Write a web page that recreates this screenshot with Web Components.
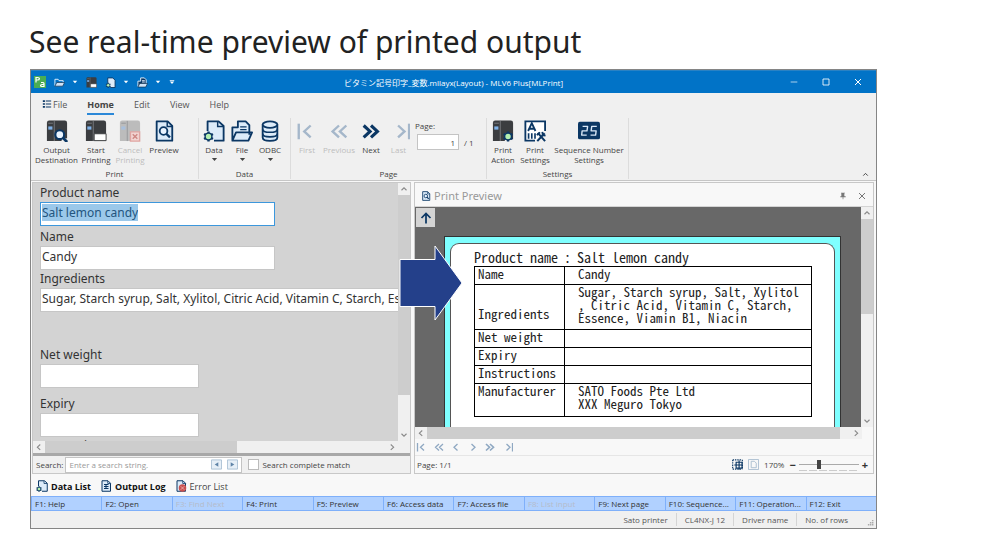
<!DOCTYPE html>
<html lang="en">
<head>
<meta charset="utf-8">
<title>Real-time preview</title>
<style>
html,body{margin:0;background:#fff}
body{font-family:"Open Sans","Noto Sans CJK JP",sans-serif;font-size:8px;color:#444}
</style>
</head>
<body>
<feature-page></feature-page>
<script>
const define=(name,css,html)=>customElements.define(name,class extends HTMLElement{
  connectedCallback(){
    if(this.shadowRoot)return;
    const t=document.createElement('template');
    t.innerHTML=`<style>*{box-sizing:border-box}button{font:inherit;color:inherit;background:none;border:0;padding:0;margin:0}input{font:inherit;color:inherit;margin:0;min-width:0;outline:0}${css}</style>`+(typeof html==='function'?html(this):html);
    this.attachShadow({mode:'open'}).append(t.content.cloneNode(true));
  }
});

const N='#0b3764',L='#dcebf9';
const printer=(c='#3b3d40',b='#7fb0e6')=>`<path fill="${c}" d="M1 3q0-2.500 2.500-2.500h17Q23 .5 23 3v20H1z"/><path fill="${b}" d="M2.500 7h4.500v3.500H2.500z"/><path stroke="#8a8d90" d="M9 1v22M2.500 3.500h5" stroke-width=".8"/>`;
const doc=(x='')=>`<path fill="${L}" stroke="${N}" stroke-width="2" stroke-linejoin="round" d="M4 1.500h12l5 5v16H4z"/><path fill="none" stroke="${N}" stroke-width="1.600" d="M15.500 2v5H21"/>${x}`;
const gear=(x,y,s=1)=>`<g transform="translate(${x} ${y}) scale(${s})"><path stroke="${N}" stroke-width="2.600" d="M0-5.500v11M-4.800-2.800l9.600 5.600M-4.800 2.800l9.600-5.600"/><circle r="3.700" fill="#b5efb0" stroke="${N}" stroke-width="1.500"/></g>`;
const lens=(x,y,s=1)=>`<g transform="translate(${x} ${y}) scale(${s})"><circle r="4.200" fill="#eaf4ff" stroke="${N}" stroke-width="2"/><path stroke="${N}" stroke-width="2.600" d="M3 3l4 4"/></g>`;
const chev=(d,w=2.6)=>`<path fill="none" stroke="currentColor" stroke-width="${w}" d="${d}"/>`;
const ICONS={
 output:printer()+'<path fill="#efefef" d="M17 20h7v4h-7z"/>'+lens(15,16,1.15),
 start:printer()+'<path fill="#fff" stroke="#3b3d40" d="M10 15h13v7.500H10z"/>',
 cancel:printer('#bcbcbc','#a8bfdc')+'<path fill="#f2d5d3" stroke="#dfa5a2" stroke-width="1.500" d="M12.500 13h10v10h-10z"/><path stroke="#cf8884" stroke-width="1.600" d="M15 15.500l5 5m0-5l-5 5"/>',
 preview:doc(lens(11.500,12)),
 data:`<path fill="${L}" stroke="${N}" stroke-width="2" stroke-linejoin="round" d="M5 12V1.500h12l5.500 5v16H12"/><path fill="none" stroke="${N}" stroke-width="1.600" d="M16 2v5h6"/>`+gear(6,18),
 file:`<path fill="${L}" stroke="${N}" stroke-width="2" stroke-linejoin="round" d="M1.500 22V8h6V1.500H16l4 4V16M1.500 22.500l4-9H23l-4 9z"/><path stroke="${N}" stroke-width="1.500" d="M10 7.500h7M10 10.500h7"/>`,
 db:`<path fill="${L}" stroke="${N}" stroke-width="2" d="M4 5v14c0 5 16 5 16 0V5"/><ellipse cx="12" cy="5" rx="8" ry="3.500" fill="${L}" stroke="${N}" stroke-width="2"/><path fill="none" stroke="${N}" stroke-width="1.800" d="M4 10c0 4.500 16 4.500 16 0M4 15c0 4.500 16 4.500 16 0"/>`,
 first:chev('M3 4v17')+chev('M16 6l-7 6.500 7 6.500'),
 previous:chev('M12 6l-7 6.500 7 6.500M20 6l-7 6.500 7 6.500'),
 next:chev('M4 6l7 6.500L4 19M12 6l7 6.500-7 6.500',3.4),
 last:chev('M23 4v17')+chev('M11 6l7 6.500-7 6.500'),
 left:chev('M15 6l-7 6.500 7 6.500'),right:chev('M9 6l7 6.500L9 19'),
 up:chev('M6 15l6-6 6 6'),down:chev('M6 9l6 6 6-6'),
 action:printer()+'<path fill="#efefef" d="M14 21h10v3H14z"/>'+gear(17.500,18),
 settings:`<path fill="#fff" stroke="${N}" stroke-width="2" d="M23 12V1.500H1.500V22.500H12"/><path fill="none" stroke="${N}" stroke-width="2" d="M4.500 12L8.500 3.500l4 8.500M6 9.500h5"/><path stroke="${N}" stroke-width="1.800" d="M5 14.500v6M8.500 14.500v6M12 14.500v6"/><path stroke="${N}" stroke-width="2.200" d="M15 14l8 9M22.500 14.500l-8 8.500"/><path fill="none" stroke="${N}" stroke-width="2" d="M14 16.500l3.500-3M20 13l.5 3.500 3 .5"/>`,
 sequence:`<rect y="2" width="24" height="19" rx="2" fill="${N}"/><path fill="none" stroke="#d9e8f8" stroke-width="1.500" stroke-linejoin="round" d="M5 7h5.500l-.7 4.800H4.500L4 16.500h5.500M20.500 7H15l-.7 4.800h5.500l-.6 4.700h-5.500"/>`,
 list:`<path stroke="${N}" stroke-width="4" d="M2 5h5M2 12h5M2 19h5"/><path stroke="${N}" stroke-width="2.500" d="M9 5h13M9 12h13M9 19h13"/>`,
 logo:'<path fill="#4aad54" d="M0 0h24v24H0z"/><path fill="none" stroke="#fff" stroke-width="2.400" d="M4 13V3h3c5 0 5 5 0 5H4M14 13h4q2 0 2 2v6h-4q-3 0-3-2t3-2h4"/>',
 openw:'<path fill="none" stroke="#e8f3ff" stroke-width="2" d="M2 19V5h7l2 3h9v4"/><path fill="#cfe3f7" stroke="#12324f" stroke-width="1.500" d="M2 20l4-8h17l-4 8z"/>',
 filew:'<path fill="#0b3764" stroke="#e8f3ff" stroke-width="2" d="M2 21V9h6V2h8l4 4v8"/><path fill="#cfe3f7" stroke="#12324f" stroke-width="1.500" d="M2 22l4-8h17l-4 8z"/><path stroke="#e8f3ff" stroke-width="2" d="M11 8h6M11 11h6"/>',
 dataw:'<path fill="#dcebf9" stroke="#0b3764" stroke-width="2" d="M6 12V2h11l5 5v16H12z"/>'+gear(7,18),
 caret:'<path fill="currentColor" d="M3 7h18l-9 10z"/>',
 custom:'<path fill="currentColor" d="M3 4h18v3H3zM3 10h18l-9 10z"/>',
 min:'<path stroke="currentColor" stroke-width="2" d="M2 12h20"/>',
 max:'<path fill="none" stroke="currentColor" stroke-width="2.500" d="M3 3h18v18H3z"/>',
 close:'<path stroke="currentColor" stroke-width="3" d="M3 3l18 18M21 3L3 21"/>',
 pin:'<path fill="currentColor" d="M6 2h12v2h-2v9h4v3h-7v6h-2v-6H4v-3h3V4H6z"/>',
 arrow:`<path fill="none" stroke="${N}" stroke-width="3.500" d="M12 23V3M3 12l9-9 9 9"/>`,
 log:doc(`<path stroke="${N}" stroke-width="2" d="M8 9h9M8 13h9M8 17h9M12 8v10"/>`),
 error:doc('<circle cx="15" cy="16" r="7.500" fill="#c8504f"/><path fill="none" stroke="#f3b8b5" stroke-width="1.600" d="M11.500 12.500l7 7m0-7l-7 7"/>'),
 fit:`<path fill="none" stroke="${N}" stroke-width="2.500" stroke-dasharray="3 2" d="M1.500 2h21M1.500 2v20M1.500 22h21M22.500 2v20"/><path fill="none" stroke="${N}" stroke-width="2.500" d="M9 7h13v13H9zM5 13h18M15.500 3v20"/>`,
 whole:'<path fill="none" stroke="currentColor" stroke-width="2" d="M1 1h22v22H1z"/><path fill="none" stroke="currentColor" stroke-width="2" d="M7 5h7l4 4v10H7z"/>',
 back:'<path fill="#e6eff7" stroke="currentColor" stroke-width="2" d="M1 2h22v20H1z"/><path fill="#5f84a8" d="M16 7v10l-8-5z"/>',
 fwd:'<path fill="#e6eff7" stroke="currentColor" stroke-width="2" d="M1 2h22v20H1z"/><path fill="#5f84a8" d="M8 7v10l8-5z"/>',
 grip:'<path fill="#aaa" d="M17 3h5v5h-5zM17 10h5v5h-5zM10 10h5v5h-5zM17 17h5v5h-5zM10 17h5v5h-5zM3 17h5v5H3z"/>'
};
define('ui-icon',':host{display:block;flex:none;width:var(--size,12px);height:var(--size,12px)}svg{display:block;width:100%;height:100%}',
 e=>`<svg viewBox="0 0 24 24" aria-hidden="true">${ICONS[e.getAttribute('name')]}</svg>`);

define('title-bar',`:host{display:grid;grid-template-columns:1fr auto 1fr;align-items:center;height:23px;background:#0173c7;color:#fff;border-top:1px solid #2a82c4}
 div{display:flex;align-items:center}.quick{padding-left:3px;gap:8px}.pair{gap:7px;--size:11px}.win{justify-content:flex-end;gap:24px;padding-right:14px}
 .small{--size:6px}.win button{--size:8px}`,
 `<div class="quick"><ui-icon name="logo"></ui-icon>
 <div class="pair"><button aria-label="Open"><ui-icon name="openw"></ui-icon></button><button class="small" aria-label="Recent"><ui-icon name="caret"></ui-icon></button></div>
 <button aria-label="Start printing" style="--size:11px"><ui-icon name="start"></ui-icon></button>
 <div class="pair"><button aria-label="Data"><ui-icon name="dataw"></ui-icon></button><button class="small" aria-label="Data menu"><ui-icon name="caret"></ui-icon></button></div>
 <div class="pair"><button aria-label="File"><ui-icon name="filew"></ui-icon></button><button class="small" aria-label="File menu"><ui-icon name="caret"></ui-icon></button></div>
 <button class="small" aria-label="Customize"><ui-icon name="custom"></ui-icon></button></div>
 <slot></slot>
 <div class="win"><button aria-label="Minimize"><ui-icon name="min"></ui-icon></button><button aria-label="Maximize"><ui-icon name="max"></ui-icon></button><button aria-label="Close"><ui-icon name="close"></ui-icon></button></div>`);

define('menu-tabs',`:host{display:flex;height:22px;padding-left:11px;gap:20px;font-size:9px;color:#555}
 a{display:flex;align-items:center;gap:1px;color:inherit;text-decoration:none;height:22px;padding-top:2px;border-bottom:2px solid transparent;--size:10px}
 a.on{font-weight:bold;color:#444;border-color:#2b88d8}`,
 `<a href="#file"><ui-icon name="list"></ui-icon>File</a><a class="on" href="#home">Home</a><a href="#edit">Edit</a><a href="#view">View</a><a href="#help">Help</a>`);

define('ribbon-group',`:host{display:flex;flex-direction:column;justify-content:space-between;border-right:1px solid #dcdcdc;height:61px}
 div{display:flex}footer{text-align:center;line-height:10px}`,
 e=>`<div><slot></slot></div><footer>${e.getAttribute('caption')}</footer>`);

define('ribbon-button',`:host{display:block;flex:none;width:var(--w,34px);--size:22px}
 button{display:flex;flex-direction:column;align-items:center;width:100%;line-height:10px;white-space:pre;text-align:center;padding-top:2px}
 span{padding-top:3px}:host([off]){color:#bdbdbd}:host([nav]) ui-icon{color:#0b3764}:host([nav][off]) ui-icon{color:#a5b7ca}.c{--size:7px;margin-top:1px}
 span,.c{margin-left:-4px;margin-right:-4px}`,
 e=>`<button ${e.hasAttribute('off')?'disabled style="color:inherit"':''}><ui-icon name="${e.getAttribute('icon')}"></ui-icon><span>${e.getAttribute('label').replace('|','\n')}</span>${e.hasAttribute('menu')?'<ui-icon class="c" name="caret"></ui-icon>':''}</button>`);

define('page-box',`:host{display:block;padding:3px 0 0 4px;width:75px}label{display:block;line-height:10px}div{display:flex;align-items:center;gap:5px;padding:3px 0 0 2px}
 input{width:42px;height:16px;border:1px solid #c4c4c4;background:#fff;text-align:right;padding:0 3px}`,
 `<label for="p">Page:</label><div><input id="p" value="1"><span>/ 1</span></div>`);

define('ribbon-bar',`:host{display:flex;height:66px;padding-top:3px;border-bottom:1px solid #c6c6c6}
 .print{width:168px}.print ribbon-button:first-child{--w:45px;margin-left:3px}.data{width:92px}.data ribbon-button{--w:28px}.data ribbon-button:first-child{margin-left:1px}
 .page{width:196px}.page ribbon-button:first-child{margin-left:1px}.set{width:142px}.set ribbon-button:first-child{margin-left:1px}.more{margin:auto 6px 0 auto;--size:9px;padding-bottom:1px}`,
 `<ribbon-group class="print" caption="Print"><ribbon-button icon="output" label="Output|Destination"></ribbon-button><ribbon-button icon="start" label="Start|Printing"></ribbon-button><ribbon-button off icon="cancel" label="Cancel|Printing"></ribbon-button><ribbon-button icon="preview" label="Preview"></ribbon-button></ribbon-group>
 <ribbon-group class="data" caption="Data"><ribbon-button menu icon="data" label="Data"></ribbon-button><ribbon-button menu icon="file" label="File"></ribbon-button><ribbon-button menu icon="db" label="ODBC"></ribbon-button></ribbon-group>
 <ribbon-group class="page" caption="Page"><ribbon-button nav off style="--w:30px" icon="first" label="First"></ribbon-button><ribbon-button nav off icon="previous" label="Previous"></ribbon-button><ribbon-button nav style="--w:30px" icon="next" label="Next"></ribbon-button><ribbon-button nav off style="--w:25px" icon="last" label="Last"></ribbon-button><page-box></page-box></ribbon-group>
 <ribbon-group class="set" caption="Settings"><ribbon-button style="--w:30px" icon="action" label="Print|Action"></ribbon-button><ribbon-button icon="settings" label="Print|Settings"></ribbon-button><ribbon-button style="--w:74px" icon="sequence" label="Sequence Number|Settings"></ribbon-button></ribbon-group>
 <button class="more" aria-label="Collapse ribbon"><ui-icon name="up"></ui-icon></button>`);

define('scroll-bar',`:host{display:flex;background:#f0f0f0;color:#888;height:12px;--size:10px}:host([vertical]){flex-direction:column;width:12px;height:auto}
 button{flex:none;display:grid;place-items:center;width:12px;height:12px;background:#f0f0f0}i{background:#cdcdcd;flex:var(--thumb) 0 0}b{flex:var(--rest) 0 0}`,
 e=>{const v=e.hasAttribute('vertical');return `<button aria-label="Back"><ui-icon name="${v?'up':'left'}"></ui-icon></button><i></i><b></b><button aria-label="Forward"><ui-icon name="${v?'down':'right'}"></ui-icon></button>`});

define('form-field',`:host{display:block;font-size:12px;color:#333}label{display:block;line-height:18px;white-space:nowrap}
 input{display:block;width:var(--w,235px);height:24px;border:1px solid #c6c6c6;background:#fff;padding:0 1px 3px}
 .box{width:var(--w,235px);height:24px;border:1px solid #3c97dc;background:#fff;padding:1px 1px 0}
 .box input{border:0;width:var(--sel);height:17px;background:#9bc8ea;padding:0 0 1px;color:#23557e}`,
 e=>{const i=`<input id="f" value="${e.getAttribute('value')||''}">`;return `<label for="f">${e.getAttribute('label')}</label>${e.hasAttribute('selected')?`<div class="box">${i}</div>`:i}`});

define('data-form',`:host{display:flex;flex-direction:column;background:#f0f0f0;border:1px solid #c8c8c8;min-width:0}
 .view{display:flex;height:258px}.form{flex:1;min-width:0;overflow:hidden;background:#d3d3d3;padding:1px 0 0 7px;font-family:"Noto Sans",sans-serif}
 .h{margin-right:12px}.search{display:flex;align-items:center;height:20px;border-top:3px solid #a8a8a8;padding-left:3px;gap:2px}
 .box{display:flex;align-items:center;width:177px;height:16px;border:1px solid #c4c4c4;background:#fff;padding:0 3px;gap:5px;color:#a9bfd3;--size:11px}
 .box input{flex:1;border:0;background:none;height:14px;padding:0}.box input::placeholder{color:#999;opacity:1}
 .check{display:flex;align-items:center;gap:3px;margin-left:4px}.check input{appearance:none;width:11px;height:11px;border:1px solid #bbb;background:#fff}`,
 `<div class="view"><div class="form"><form-field selected style="--sel:96px" label="Product name" value="Salt lemon candy"></form-field>
 <form-field style="margin-top:2px" label="Name" value="Candy"></form-field>
 <form-field style="--w:420px" label="Ingredients" value="Sugar, Starch syrup, Salt, Xylitol, Citric Acid, Vitamin C, Starch, Essence"></form-field>
 <form-field style="margin-top:34px;--w:159px" label="Net weight"></form-field><form-field style="margin-top:7px;--w:159px" label="Expiry"></form-field><form-field style="--w:159px" label="Instructions"></form-field></div>
 <scroll-bar vertical style="--thumb:200;--rest:34"></scroll-bar></div>
 <scroll-bar class="h" style="--thumb:193;--rest:149"></scroll-bar>
 <div class="search"><label for="s">Search:</label><div class="box"><input id="s" placeholder="Enter a search string."><button aria-label="Find previous"><ui-icon name="back"></ui-icon></button><button aria-label="Find next"><ui-icon name="fwd"></ui-icon></button></div>
 <label class="check"><input type="checkbox">Search complete match</label></div>`);

define('product-label',`:host{display:flex;flex-direction:column;background:#7fffff;border:1px solid #333;border-bottom:0;padding:6px 5px 0;color:#222;font:13px/13px "Noto Sans CJK JP","Liberation Mono",monospace;font-feature-settings:"hwid";white-space:pre}
 .paper{flex:1;background:#fff;border:1px solid #555;border-bottom:0;border-radius:9px 9px 0 0;padding:5px 22px 0 23px}
 p{margin:0 0 1px;font-size:14px;line-height:16px}table{width:100%;border-collapse:collapse;table-layout:fixed}
 th,td{border:1px solid #000;padding:0 0 0 3px;font-weight:normal;text-align:left;vertical-align:top;height:18px;line-height:13px}
 table{border:1px solid #222}th{width:90px}td{padding-left:13px}.tall>*{height:45px}.tall th{padding-top:22px}.last>*{height:33px}`,
 `<div class="paper"><p>Product name<span style="margin-left:6px">:</span><span style="margin-left:6px">Salt lemon candy</span></p><table>
 <tr><th scope="row">Name</th><td>Candy</td></tr><tr class="tall"><th scope="row">Ingredients</th><td>Sugar, Starch syrup, Salt, Xylitol
, Citric Acid, Vitamin C, Starch,
Essence, Viamin B1, Niacin</td></tr><tr><th scope="row">Net weight</th><td></td></tr><tr><th scope="row">Expiry</th><td></td></tr><tr><th scope="row">Instructions</th><td></td></tr>
 <tr class="last"><th scope="row">Manufacturer</th><td>SATO Foods Pte Ltd
XXX Meguro Tokyo</td></tr></table></div>`);

define('print-preview',`:host{display:flex;flex-direction:column;background:#f8f8f8;border:1px solid #c8c8c8;min-width:0}
 header{display:flex;align-items:center;height:24px;border-bottom:1px solid #d4d4d4;padding:2px 7px 0 6px;gap:3px;color:#777;--size:10px}
 header span{flex:1;font-size:10px;font-family:"Noto Sans",sans-serif;color:#999}header button{--size:8px;margin-left:8px}
 .view{display:flex;height:220px}.canvas{position:relative;flex:1;min-width:0;background:#686868;display:flex;overflow:hidden}
 .up{position:absolute;left:1px;top:1px;width:19px;height:19px;display:grid;place-items:center;background:#d4d4d4;--size:12px}
 product-label{flex:1;margin:29px 20px 0 29px}.h{margin-right:11px}
 nav{display:flex;align-items:center;height:17px;border-bottom:1px solid #e6e6e6;padding-left:1px;gap:5px;color:#8fa8c2;--size:12px}
 footer{display:flex;align-items:center;height:17px;padding:0 5px 0 2px;gap:5px}footer span:first-child{flex:1}
 footer button{color:#a8bccf;--size:11px}input{appearance:none;width:60px;height:12px;background:repeating-linear-gradient(90deg,#ccc 0 8px,transparent 8px 10px) 0 100%/100% 1px no-repeat,linear-gradient(#aaa,#aaa) 0 50%/100% 1px no-repeat}
 input::-webkit-slider-thumb{appearance:none;width:4px;height:9px;background:#444}.zoom{display:flex;align-items:center;gap:3px}.zoom button{font-size:11px;font-weight:bold;line-height:12px;color:#333}`,
 `<header><ui-icon name="preview"></ui-icon><span style="font-size:11px">Print Preview</span><button aria-label="Pin"><ui-icon name="pin"></ui-icon></button><button aria-label="Close"><ui-icon name="close"></ui-icon></button></header>
 <div class="view"><div class="canvas"><product-label></product-label><button class="up" aria-label="Feed direction"><ui-icon name="arrow"></ui-icon></button></div><scroll-bar vertical style="--thumb:95;--rest:102"></scroll-bar></div>
 <scroll-bar class="h" style="--thumb:414;--rest:10"></scroll-bar>
 <nav aria-label="Pages">${['first','previous','left','right','next','last'].map(n=>`<button aria-label="${n}"><ui-icon name="${n}"></ui-icon></button>`).join('')}</nav>
 <footer><span>Page: 1/1</span><button aria-label="Fit width"><ui-icon name="fit"></ui-icon></button><button aria-label="Whole page"><ui-icon name="whole"></ui-icon></button><span>170%</span><div class="zoom"><button aria-label="Zoom out">−</button><input type="range" aria-label="Zoom" value="33"><button aria-label="Zoom in">+</button></div></footer>`);

define('work-area',`:host{position:relative;display:grid;grid-template-columns:380fr 461fr;gap:3px;padding:1px 2px 0 1px;background:#f8f8f8}
 .arrow{position:absolute;left:calc((100% - 6px)*.4518 - 11px);top:63px;width:64px;height:78px}`,
 `<data-form></data-form><print-preview></print-preview><svg class="arrow" viewBox="0 0 64 78" aria-hidden="true"><path fill="#24408a" stroke="#fff" d="M1 15.500h35V2l27 37-27 37V62.500H1z"/></svg>`);

define('pane-tabs',`:host{display:flex;align-items:center;height:22px;background:#f8f8f8;padding:2px 0 0 5px;gap:9px;font-size:9px}
 button{display:flex;align-items:center;gap:3px}.on{font-weight:bold;color:#111}`,
 `<button class="on"><ui-icon name="data"></ui-icon>Data List</button><button class="on"><ui-icon name="log"></ui-icon>Output Log</button><button><ui-icon name="error"></ui-icon>Error List</button>`);

define('function-keys',`:host{display:grid;grid-template-columns:repeat(12,1fr);height:15px;background:#b1d1ff;border:1px solid #7fb0fa;border-width:1px 0;color:#333}
 button{text-align:left;padding-left:3px;border-left:1px solid #7fb0fa;white-space:nowrap;overflow:hidden}button:disabled{color:#b5bccb}`,
 ['F1: Help','F2: Open','-F3: Find Next','F4: Print','F5: Preview','F6: Access data','F7: Access file','-F8: List input','F9: Next page','F10: Sequence...','F11: Operation...','F12: Exit'].map(t=>t[0]==='-'?`<button disabled>${t.slice(1)}</button>`:`<button>${t}</button>`).join(''));

define('status-bar',`:host{display:flex;justify-content:flex-end;align-items:center;height:17px;background:#f0f0f0;color:#555}
 span{padding:0 8px;border-right:1px solid #d4d4d4;line-height:13px}span:nth-of-type(4){border:0;margin-right:11px}ui-icon{--size:7px;align-self:flex-end;margin:0 2px 2px 0}`,
 `<span>Sato printer</span><span>CL4NX-J 12</span><span>Driver name</span><span>No. of rows</span><ui-icon name="grip"></ui-icon>`);

define('app-window',':host{display:block;border:1px solid #858585;background:#f0f0f0}',
 `<title-bar>ビタミン記号印字_変数.mllayx(Layout) - MLV6 Plus[MLPrint]</title-bar><menu-tabs></menu-tabs><ribbon-bar></ribbon-bar><work-area></work-area><pane-tabs></pane-tabs><function-keys></function-keys><status-bar></status-bar>`);

define('feature-page',`:host{display:block;padding:14px 123px 0 29px}h1{margin:0;height:55px;font:30px/56px "Noto Sans",sans-serif;color:#222;white-space:nowrap}app-window{margin-left:1px}`,
 `<h1>See real-time preview of printed output</h1><app-window></app-window>`);
</script>
</body>
</html>
